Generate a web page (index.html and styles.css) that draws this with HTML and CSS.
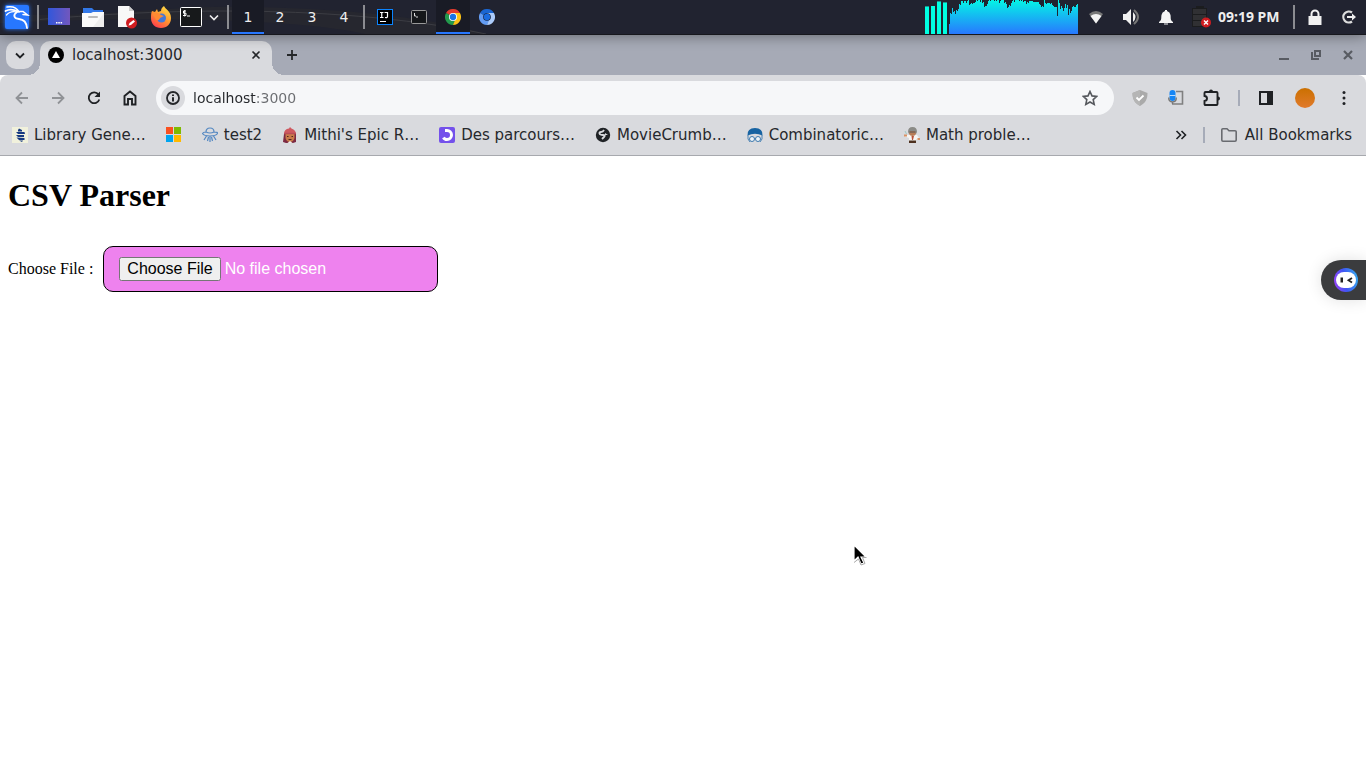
FILE: index.html
```html
<!DOCTYPE html>
<html lang="en">
<head>
<meta charset="utf-8">
<title>CSV Parser</title>
<link rel="stylesheet" href="styles.css">
</head>
<body>
<header class="panel">
  <svg class="panel-art" viewBox="0 0 1366 35" preserveAspectRatio="none" aria-hidden="true"><path d="M0 12C70 22 150 7 235 7C350 8 440 20 486 35H365C310 22 170 15 0 24Z" fill="#26272f"/><path d="M40 20C130 12 320 0 486 35" fill="none" stroke="#3c3d43"/></svg>
  <button class="cell" aria-label="Applications">
    <svg class="kali" width="30" height="30" viewBox="0 0 30 30"><rect x="3" y="3" width="24" height="24" rx="2" fill="#2777ff"/><g fill="none" stroke="#fff" stroke-linecap="round"><path d="M5 5C11 4 15 6 17 10" stroke-width="1.600"/><path d="M3.500 9C8 6.500 12 7.500 16 9.500" stroke-width="1.800"/><path d="M4.500 13C7 10 11 9 15 10" stroke-width="1.200"/><path d="M16 9.500L21 9.500L25.500 13L21 12.500" stroke-width="1.500"/><path d="M15 10C10.500 13 12 16.500 17 17C22 17.500 24.500 20 25 26" stroke-width="1.800"/></g></svg>
  </button>
  <span class="bar"></span>
  <button class="cell" aria-label="Show desktop">
    <svg width="22" height="18" viewBox="0 0 22 18"><defs><linearGradient id="desk" x2="1" y2="0"><stop stop-color="#3157db"/><stop offset="1" stop-color="#7257bd"/></linearGradient></defs><path fill="url(#desk)" d="M0 0h22v17H0z"/><path fill="#fff" d="M8 14h1.500v1.500H8zM10.300 14h1.500v1.500h-1.500zM12.600 14h1.500v1.500h-1.500z"/></svg>
  </button>
  <button class="cell" aria-label="Files">
    <svg width="22" height="21" viewBox="0 0 22 21"><path d="M1 1h9l2 2h9v7H1z" fill="#3278e8"/><path d="M0 6h9l2-1h11v15H0z" fill="#fafafa"/><path d="M22 6v14H11z" fill="#eee"/><rect x="6" y="9" width="10" height="2" rx="1" fill="#bbb"/></svg>
  </button>
  <button class="cell" aria-label="Text editor">
    <svg width="20" height="24" viewBox="0 0 20 24"><path d="M1 1h11l5 5v16H1z" fill="#f8f8f8"/><path d="M12 1v5h5z" fill="#ccc"/><circle cx="14.500" cy="18" r="5.500" fill="#cf1c20"/><path d="M11.500 20.500l1-2.500 4-3 1.500 1.500-4 3.500z" fill="#fff"/></svg>
  </button>
  <button class="cell" aria-label="Firefox">
    <svg width="22" height="22" viewBox="0 0 22 22"><defs><linearGradient id="fox" x1=".8" y1="0" x2=".2" y2="1"><stop stop-color="#ffe047"/><stop offset=".5" stop-color="#ff9630"/><stop offset="1" stop-color="#ff3750"/></linearGradient></defs><path d="M2 5l3 1 2-3 1 3 3-1c0-3 2-4 3-5 1 3 7 5 7 12 0 6-4 10-10 10S1 18 1 12c0-3 0-5 1-7z" fill="url(#fox)"/><circle cx="11.500" cy="12" r="4.500" fill="#4378d8"/><path d="M2 7c4-1 7 0 9 2l3 1-4 2c-1 3-4 3-5 0z" fill="#ff8a32"/></svg>
  </button>
  <button class="cell cell-term" aria-label="Terminal">
    <svg width="22" height="20" viewBox="0 0 22 20"><rect x=".5" y=".5" width="21" height="19" rx="1" fill="#17191b" stroke="#fff"/><path d="M6 4H3.500v2.200H6v2.300H3M4.700 3v6.500M7 9h3" stroke="#fff" fill="none"/></svg>
  </button>
  <button class="cell cell-chev" aria-label="More terminals">
    <svg width="10" height="7" viewBox="0 0 10 7"><path d="M1 1.500l4 4 4-4" stroke="#eee" stroke-width="1.600" fill="none"/></svg>
  </button>
  <span class="bar"></span>
  <button class="ws active">1</button><button class="ws">2</button><button class="ws">3</button><button class="ws">4</button>
  <span class="bar"></span>
  <button class="cell" aria-label="IntelliJ IDEA">
    <svg width="16" height="16" viewBox="0 0 16 16"><rect x=".5" y=".5" width="15" height="15" fill="#000" stroke="#0b84ff"/><path d="M3 3.500h3.500M4.750 3.500v5M3 8.500h3.500M7.500 3.500h3V7.500q0 1.500-2.500 1M3 12.500h6" stroke="#fff" stroke-width="1.200" fill="none"/></svg>
  </button>
  <button class="cell" aria-label="Terminal window">
    <svg width="16" height="14" viewBox="0 0 16 14"><rect x=".5" y=".5" width="15" height="13" rx="1" fill="#15171a" stroke="#999"/><path d="M3.500 3v3l1.500 0M5 7h2" stroke="#ddd" fill="none"/></svg>
  </button>
  <button class="cell active" aria-label="Chrome">
    <svg width="16" height="16" viewBox="0 0 48 48"><path d="M24 24L3.200 12A24 24 0 0 1 44.800 12z" fill="#e33b2e"/><path d="M24 24L3.200 12A24 24 0 0 0 24 48L34 30z" fill="#229a4c"/><path d="M24 24h10L24 48A24 24 0 0 0 44.800 12H24z" fill="#fbc116"/><circle cx="24" cy="24" r="12" fill="#fff"/><circle cx="24" cy="24" r="9.500" fill="#1a73e8"/></svg>
  </button>
  <button class="cell" aria-label="Chromium">
    <svg width="16" height="16" viewBox="0 0 48 48"><path d="M24 24L3.200 12A24 24 0 0 1 44.800 12z" fill="#1b66d2"/><path d="M24 24L3.200 12A24 24 0 0 0 24 48L34 30z" fill="#639cf4"/><path d="M24 24h10L24 48A24 24 0 0 0 44.800 12H24z" fill="#accbfa"/><circle cx="24" cy="24" r="11.500" fill="#14213c"/><circle cx="24" cy="24" r="9.500" fill="#1a6be0"/></svg>
  </button>
  <span class="spacer"></span>
  <svg class="monitor" width="153" height="34" viewBox="925 0 153 34" aria-label="CPU usage"><defs><linearGradient id="cpu" x2="0" y2="1"><stop stop-color="#04f5e5"/><stop offset="1" stop-color="#2878ff"/></linearGradient></defs>
    <path fill="#00ffe1" d="M925 7h4v27h-4zM931 6h4v28h-4zM937 2h4v32h-4zM943 3h4v31h-4z"/><path fill="#149c92" d="M925 6h4v1h-4zM937 1h4v1h-4zM943 2h4v1h-4z"/>
    <path fill="url(#cpu)" shape-rendering="crispEdges" d="M949 34V24h1V13h1v1h1V8h1v4h1v-1h1v3h1v-4h1v1h1V9h1V4h1v1h1V1h2v2h1V1h2v2h1V1h1V0h1v5h1V4h1V3h1v1h1V3h2V2h1V0h1v1h1V0h2v2h1V0h1v3h1V2h1v5h1V6h2V4h1V1h1V0h1v1h1V0h3v1h1V0h1v1h1V0h2v3h1V1h1V0h3v3h1V2h1v2h1v4h1V7h1V5h1v1h1V3h1V1h1V0h1v2h1V0h4v1h1V0h1v1h1V0h1v2h1V1h2v3h1V2h1v1h1V1h4v1h6v2h1v1h1v2h1V6h1v1h1V0h1v3h1v1h1V3h3v1h1V3h1v2h1v1h1v1h3v9h1V0h1v3h1v6h1V6h1v2h1v3h1V8h1V4h1v4h1V5h1v10h1V9h1v4h1v-2h1V7h1V6h1v1h2V5h1V4h1v30z"/></svg>
  <button class="cell-status" aria-label="Network"><svg width="16" height="14" viewBox="0 0 16 14"><path d="M1 4Q8-2 15 4L8 13.500z" fill="#777"/><path d="M2.500 6q5.500-4 11 0L8 13.500z" fill="#f3f3f3"/></svg></button>
  <button class="cell-status" aria-label="Volume"><svg width="18" height="16" viewBox="0 0 18 16"><path d="M1 5h3l5-5v16l-5-5H1z" fill="#f1f1f1"/><path d="M11 3q5 5 0 10z" fill="#eee"/><path d="M12 1q8 7 0 14" fill="none" stroke="#777" stroke-width="2"/></svg></button>
  <button class="cell-status" aria-label="Notifications"><svg width="16" height="16" viewBox="0 0 16 16"><path d="M1 14v-1c3-2 2-4 2.500-7Q4 3 7 2V1h2v1q3 1 3.500 4c.5 3-.5 5 2.500 7v1z" fill="#f4f4f4"/><path d="M6 15h4" stroke="#f4f4f4"/></svg></button>
  <button class="cell-status" aria-label="Battery missing"><svg width="20" height="24" viewBox="0 0 20 24"><path d="M1 3h4V1h8v2h3v19H1z" fill="#1b1c1e"/><path d="M2 4h13v5H2zM2 10h13v5H2zM2 16h13v5H2z" fill="#303033"/><circle cx="15" cy="17.500" r="5" fill="#cf1c20"/><path d="M13 15.500l4 4m0-4l-4 4" stroke="#fff" stroke-width="1.400"/></svg></button>
  <time class="clock">09:19 PM</time>
  <span class="bar"></span>
  <button class="cell" aria-label="Lock"><svg width="14" height="16" viewBox="0 0 14 16"><path d="M3.500 8V5a3.500 3.500 0 0 1 7 0v3" stroke="#f1f1f1" stroke-width="2" fill="none"/><path d="M.500 7h13v9H.500z" fill="#f1f1f1"/></svg></button>
  <button class="cell" aria-label="Log out"><svg width="16" height="14" viewBox="0 0 16 14"><path d="M11 2.500A5.500 5.500 0 1 0 11 11.500" stroke="#ddd" stroke-width="2.200" fill="none"/><path d="M6 6h5V3.500l4 3.500-4 3.500V8H6z" fill="#eee"/></svg></button>
</header>

<nav class="tabs" aria-label="Tabs">
  <button class="tab-search" aria-label="Search tabs"><svg width="10" height="7" viewBox="0 0 10 7"><path d="M1 1.500l4 4 4-4" stroke="#1f2124" stroke-width="1.800" fill="none"/></svg></button>
  <div class="tab">
    <svg width="16" height="16" viewBox="0 0 16 16"><circle cx="8" cy="8" r="8" fill="#000"/><path d="M8 4l4 7H4z" fill="#fff"/></svg>
    <span class="tab-title">localhost:3000</span>
    <button class="tab-close" aria-label="Close tab"><svg width="10" height="10" viewBox="0 0 10 10"><path d="M1.500 1.500l7 7m0-7l-7 7" stroke="#25272a" stroke-width="1.600"/></svg></button>
  </div>
  <button class="tab-new" aria-label="New tab"><svg width="12" height="12" viewBox="0 0 12 12"><path d="M6 1v10M1 6h10" stroke="#25272a" stroke-width="1.800"/></svg></button>
  <span class="spacer"></span>
  <button class="win" aria-label="Minimize"><svg width="10" height="10" viewBox="0 0 10 10"><path d="M0 8h10v2H0z" fill="#585b62"/></svg></button>
  <button class="win" aria-label="Restore"><svg width="10" height="10" viewBox="0 0 10 10"><path d="M4 1h5v5H4zM1 2v7h7" stroke="#585b62" stroke-width="2" fill="none"/></svg></button>
  <button class="win" aria-label="Close window"><svg width="10" height="10" viewBox="0 0 10 10"><path d="M1 1l8 8m0-8L1 9" stroke="#585b62" stroke-width="2.200"/></svg></button>
</nav>

<div class="toolbar">
  <button class="tool" aria-label="Back"><svg width="14" height="14" viewBox="0 0 14 14"><path d="M13 7H2M7 1.500L1.500 7 7 12.500" stroke="#909296" stroke-width="1.800" fill="none"/></svg></button>
  <button class="tool" aria-label="Forward"><svg width="14" height="14" viewBox="0 0 14 14"><path d="M1 7h11M7 1.500L12.500 7 7 12.500" stroke="#909296" stroke-width="1.800" fill="none"/></svg></button>
  <button class="tool" aria-label="Reload"><svg width="14" height="14" viewBox="0 0 14 14"><path d="M11.500 3.500A5.400 5.400 0 1 0 12.300 8.500" stroke="#1f2124" stroke-width="1.800" fill="none"/><path d="M13 .500v5.500H7.500L10 3.500z" fill="#1f2124"/></svg></button>
  <button class="tool" aria-label="Home"><svg width="14" height="16" viewBox="0 0 14 16"><path d="M1.500 14.500V6L7 1.500 12.500 6v8.500H9V9H5v5.500z" stroke="#1f2124" stroke-width="1.900" fill="none"/></svg></button>
  <div class="omnibox">
    <button class="info" aria-label="Site information"><svg width="14" height="14" viewBox="0 0 14 14"><circle cx="7" cy="7" r="6" stroke="#25272a" stroke-width="1.800" fill="none"/><path d="M6 3.500h2v1.600H6zM6 6.300h2v4.200H6z" fill="#25272a"/></svg></button>
    <input class="url" type="text" value="localhost:3000" aria-label="Address">
    <button class="star" aria-label="Bookmark this page"><svg width="16" height="16" viewBox="0 0 16 16"><path d="M8 1.500l2 4.400 4.700.500-3.500 3.200 1 4.800L8 12l-4.200 2.400 1-4.800L1.300 6.400 6 5.900z" stroke="#55585d" stroke-width="1.600" fill="none"/></svg></button>
  </div>
  <button class="tool" aria-label="Shield"><svg width="16" height="16" viewBox="0 0 16 16"><path d="M8 0l7.500 3c0 6-2 10-7.500 13C2.500 13 .500 9 .500 3z" fill="#aaa"/><path d="M8 0v16C2.500 13 .500 9 .500 3z" fill="#b5b5b5"/><path d="M4.500 7.500L7 10l4.500-4.500" stroke="#fff" stroke-width="1.800" fill="none"/></svg></button>
  <button class="tool" aria-label="Voice"><svg width="16" height="16" viewBox="0 0 16 16"><path d="M8 1.500h6.500v12.500H4" stroke="#808080" stroke-width="1.600" fill="none"/><rect x="1.500" width="6" height="11" rx="3" fill="#1585f5"/><path d="M.7 7.500q0 4.500 3.800 4.500t3.800-4.500M4.500 12v2" stroke="#777" stroke-width="1.400" fill="none"/><path d="M1.500 5.500h6" stroke="#b8dbff"/></svg></button>
  <button class="tool" aria-label="Extensions"><svg width="18" height="18" viewBox="0 0 18 18"><path d="M2.500 3h11q1 0 1 1v11q0 1-1 1h-11q-1 0-1-1v-3q2.500-.300 2.500-2.500T1.500 7V4q0-1 1-1z" stroke="#1f2124" stroke-width="1.900" fill="none"/><path d="M6 2.500a2 2 0 0 1 4 0zM15 7.500a2 2 0 0 1 0 4z" fill="#1f2124"/></svg></button>
  <span class="divider"></span>
  <button class="tool" aria-label="Side panel"><svg width="14" height="14" viewBox="0 0 14 14"><path d="M1 1h12v12H1z" stroke="#1f2124" stroke-width="2" fill="none"/><path d="M8 1h5v12H8z" fill="#1f2124"/></svg></button>
  <button class="tool profile" aria-label="Profile"><span class="avatar"></span></button>
  <button class="tool" aria-label="Menu"><svg width="4" height="16" viewBox="0 0 4 16"><g fill="#1f2124"><circle cx="2" cy="2.500" r="1.500"/><circle cx="2" cy="8" r="1.500"/><circle cx="2" cy="13.500" r="1.500"/></g></svg></button>
</div>

<nav class="bookmarks" aria-label="Bookmarks">
  <a href="#"><svg width="16" height="16" viewBox="0 0 16 16"><path fill="#f1f1dc" d="M0 0h16v16H0z"/><path d="M7 1.500l3 1.500v1.500H6V3zM4 5h8.500l.500 2H6zM4 8h8v2H6zM4.500 10.500l8 .5v2H7zM7 13.500h4l-1 1.500z" fill="#173a80"/></svg>Library Gene…</a>
  <a href="#" aria-label="Microsoft"><svg width="16" height="16" viewBox="0 0 16 16"><path fill="#fa5020" d="M0 0h7v7H0z"/><path fill="#7fba00" d="M8 0h7v7H8z"/><path fill="#00a4ef" d="M0 8h7v7H0z"/><path fill="#ffb900" d="M8 8h7v7H8z"/></svg></a>
  <a href="#"><svg width="16" height="16" viewBox="0 0 16 16"><path d="M4 5q0-4 4-4t4 4q4 0 3.500 1.500Q14 9 8 9T.500 6.500Q1 5 4 5q4 2 8 0M4.500 9L2 13M6.500 10l-1 4M8 9v6M9.500 10l1 4M11.500 9l2.500 4" fill="none" stroke="#5488c2" stroke-width="1.200"/></svg>test2</a>
  <a href="#"><svg width="16" height="16" viewBox="0 0 16 16"><path d="M2 7h12v8l-3 1H4l-3-1z" fill="#7c2942"/><path d="M3.500 7h9v4q-1 4-4.500 4t-4.500-4z" fill="#c97a4a"/><path d="M2 7Q2 2 7 1.500L8 0l1.500 1.500Q14 3 14 7z" fill="#cf5960"/><path d="M2 6.500h12" stroke="#b94c58" stroke-width="1.500"/><path d="M5.500 16l2.500-2 2.500 2z" fill="#eee"/><path d="M5 9.500h1.500M9.500 9.500H11M6.500 12.500h3" stroke="#532620"/></svg>Mithi's Epic R…</a>
  <a href="#"><svg width="16" height="16" viewBox="0 0 16 16"><rect width="16" height="16" rx="2" fill="#7451eb"/><path d="M6 3.500h2a4.500 4.500 0 0 1 0 9q-2.500 0-3.500-2" stroke="#fff" stroke-width="3" fill="none"/></svg>Des parcours…</a>
  <a href="#"><svg width="16" height="16" viewBox="0 0 16 16"><circle cx="8" cy="8" r="7.200" fill="#202326"/><path d="M9 3q-1 2-3 2t-1.500 1.500T8 8t1 2-2 2" stroke="#d9dade" stroke-width="1.800" fill="none"/><path d="M10 6l3 2h-3z" fill="#d9dade"/></svg>MovieCrumb…</a>
  <a href="#"><svg width="16" height="16" viewBox="0 0 16 16"><path d="M.5 8.500Q0 1 8 1t7.500 7.500Q8 5 .5 8.500z" fill="#1763a2"/><path d="M1 8v4l2 3M15 8v4l-2 3M7 11.500h2" stroke="#4c83b4" fill="none"/><circle cx="5" cy="12" r="2.500" fill="#eef4f8" stroke="#3d79ae"/><circle cx="11" cy="12" r="2.500" fill="#eef4f8" stroke="#3d79ae"/></svg>Combinatoric…</a>
  <a href="#"><svg width="16" height="16" viewBox="0 0 16 16"><path d="M4 8h9l2 3-1 2-2-1v2H5v-3L1 9.500 2 8z" fill="#f5f5f3"/><path d="M5 3h7v4q-1 2-3.500 2T5 7z" fill="#b77c56"/><path d="M4 5Q4 0 8.500 0T13 5l-1 2-1-3H6L5 7z" fill="#8b8b87"/><path d="M5.500 5h6" stroke="#555"/><path d="M7.500 9h2.500l-1 4H8z" fill="#bd5338"/><path d="M5 13.500h7V16H5z" fill="#4d301f"/><path d="M0 7.500h3v2H0zM13.500 11H16v2h-2.500z" fill="#d99264"/><path d="M1 4l1.500 3" stroke="#9bcbc6"/></svg>Math proble…</a>
  <span class="spacer"></span>
  <button class="more" aria-label="More bookmarks"><svg width="12" height="10" viewBox="0 0 12 10"><path d="M1.500 1l4 4-4 4M6.500 1l4 4-4 4" stroke="#1f2124" stroke-width="1.600" fill="none"/></svg></button>
  <span class="divider divider-wide"></span>
  <a href="#" class="all"><svg width="16" height="14" viewBox="0 0 16 14"><path d="M.800 1.800q0-1 1-1H6l2 2h6q1.200 0 1.200 1V12q0 1.200-1.200 1.200H2Q.800 13.200.800 12z" stroke="#696b70" stroke-width="1.600" fill="none"/></svg>All Bookmarks</a>
</nav>

<main class="page">
  <h1>CSV Parser</h1>
  <label for="csv">Choose File :</label><input class="file" id="csv" type="file" accept=".csv">
  <button class="assistant" aria-label="Assistant">
    <svg width="24" height="24" viewBox="0 0 24 24"><defs><linearGradient id="ring" x1="0" y1=".6" x2="1" y2=".4"><stop stop-color="#9241f5"/><stop offset=".45" stop-color="#3f55f5"/><stop offset="1" stop-color="#36a5ec"/></linearGradient></defs><circle cx="12" cy="12" r="12" fill="url(#ring)"/><rect x="2" y="4" width="20" height="16" rx="8" fill="#fff"/><path d="M6.500 9.500H9v5H6.500z" fill="#222"/><path d="M18 10l-3.500 2.300L18 14.500" stroke="#222" stroke-width="1.800" fill="none"/></svg>
  </button>
  <svg class="pointer" width="14" height="24" viewBox="0 0 14 24" aria-hidden="true"><path d="M1 1v16l4-4 3 7 3-1-3-6h5z" fill="#000" stroke="#fff" stroke-width="1.200"/><path d="M13.500 13.500H9.500l2.500 6-4 1.500-2.500-6-4.500 3.500" stroke="#aaa" fill="none"/></svg>
</main>
</body>
</html>
```
FILE: styles.css
```css
* { box-sizing: border-box; }

body {
  margin: 0;
  min-height: 100vh;
  display: flex;
  flex-direction: column;
  overflow: hidden;
  background: #fff;
  font-family: "DejaVu Sans", sans-serif;
  color: #26282c;
}

button {
  margin: 0;
  padding: 0;
  border: 0;
  background: none;
  font: inherit;
  color: inherit;
  display: flex;
  align-items: center;
  justify-content: center;
  flex: none;
}

svg { display: block; flex: none; }

.spacer { flex: 1; }

/* Desktop panel */
.panel {
  position: relative;
  z-index: 2;
  display: flex;
  height: 35px;
  background: #212330;
  border-bottom: 1px solid #17181d;
  box-shadow: 0 1px 14px rgba(0, 0, 0, .4);
  color: #eee;
}

.panel-art {
  position: absolute;
  inset: 0;
  width: 100%;
  height: 100%;
  z-index: -1;
}

.cell { width: 34px; }
.cell-term { width: 26px; }
.cell-chev { width: 20px; }
.cell-status { width: 35px; }
.kali { filter: drop-shadow(0 0 2px #2777ff); }

.bar {
  width: 2px;
  margin: 5px 3px;
  background: #8b8c91;
}

.ws { width: 32px; font-size: 14px; }

.active {
  background: #191b25;
  box-shadow: inset 0 -2px #2777ff;
}

.clock {
  width: 72px;
  align-self: center;
  font: bold 14px/20px "Noto Sans", sans-serif;
  white-space: nowrap;
}

/* Tab strip */
.tabs {
  display: flex;
  height: 40px;
  padding: 6px 2px 0 6px;
  background: #a6aab6;
}

.tab-search {
  width: 28px;
  height: 28px;
  border-radius: 10px;
  background: #d9dade;
}

.tab {
  position: relative;
  display: flex;
  align-items: center;
  gap: 8px;
  width: 232px;
  margin-left: 6px;
  padding: 0 8px 6px;
  border-radius: 10px 10px 0 0;
  background: #d9dade;
  font-size: 15px;
}

.tab::before,
.tab::after {
  content: "";
  position: absolute;
  bottom: 0;
  width: 12px;
  height: 12px;
}

.tab::before {
  right: 100%;
  background: radial-gradient(circle at 0 0, transparent 12px, #d9dade 12px);
}

.tab::after {
  left: 100%;
  background: radial-gradient(circle at 100% 0, transparent 12px, #d9dade 12px);
}

.tab-title { flex: 1; }
.tab-close { width: 16px; height: 16px; }
.tab-new { width: 40px; height: 28px; }
.win { width: 32px; height: 28px; }

/* Toolbar */
.toolbar {
  display: flex;
  align-items: center;
  height: 46px;
  padding: 0 4px;
  background: #d9dade;
  border-radius: 8px 8px 0 0;
}

.tabs + .toolbar { outline: 4px solid transparent; }

.tool { width: 36px; height: 34px; }
.profile { width: 42px; }

.avatar {
  width: 20px;
  height: 20px;
  border-radius: 50%;
  background: linear-gradient(#cb7000, #e17a2c);
}

.omnibox {
  flex: 1;
  display: flex;
  align-items: center;
  height: 34px;
  margin: 0 8px;
  padding: 0 16px 0 5px;
  border-radius: 17px;
  background: #f6f7f9;
}

.info {
  width: 24px;
  height: 24px;
  border-radius: 50%;
  background: #d9dade;
}

.url {
  flex: 1;
  min-width: 0;
  margin: 0 8px;
  padding: 0;
  border: 0;
  outline: 0;
  font: 14px/20px "DejaVu Sans", sans-serif;
  color: #26282c;
  background: linear-gradient(90deg, #26282c 64px, #6a6c70 64px) text;
  -webkit-text-fill-color: transparent;
}

.divider {
  width: 2px;
  height: 16px;
  margin: 0 8px;
  background: #a6abb8;
}

/* Bookmarks bar */
.bookmarks {
  display: flex;
  align-items: center;
  gap: 20px;
  height: 35px;
  padding: 0 14px 7px 12px;
  background: #d9dade;
  border-bottom: 1px solid #a7a9ae;
  font-size: 15px;
  white-space: nowrap;
}

.bookmarks a {
  display: flex;
  align-items: center;
  gap: 6px;
  color: inherit;
  text-decoration: none;
}

.bookmarks .more { width: 12px; height: 20px; }
.bookmarks .divider-wide { margin: 0 -4px; }
.bookmarks .all { gap: 8px; }

/* Page */
.page {
  position: relative;
  flex: 1;
  padding: 0 8px;
  font: 16px "Liberation Serif", serif;
  color: #000;
}

.page h1 {
  margin: 21px 0;
  font-size: 32px;
  line-height: 37px;
}

.file {
  width: 335px;
  margin: 11px 10px;
  padding: 10px 15px;
  border: 1px solid #000;
  border-radius: 10px;
  background: violet;
  color: #fff;
  font: 16px "Liberation Sans", sans-serif;
}

.assistant {
  position: absolute;
  top: 104px;
  right: 0;
  width: 45px;
  height: 40px;
  padding-left: 5px;
  border-radius: 20px 0 0 20px;
  background: #3b3c3e;
  box-shadow: 0 0 16px rgba(0, 0, 0, .12);
}

.pointer {
  position: absolute;
  top: 388px;
  left: 853px;
}
```
